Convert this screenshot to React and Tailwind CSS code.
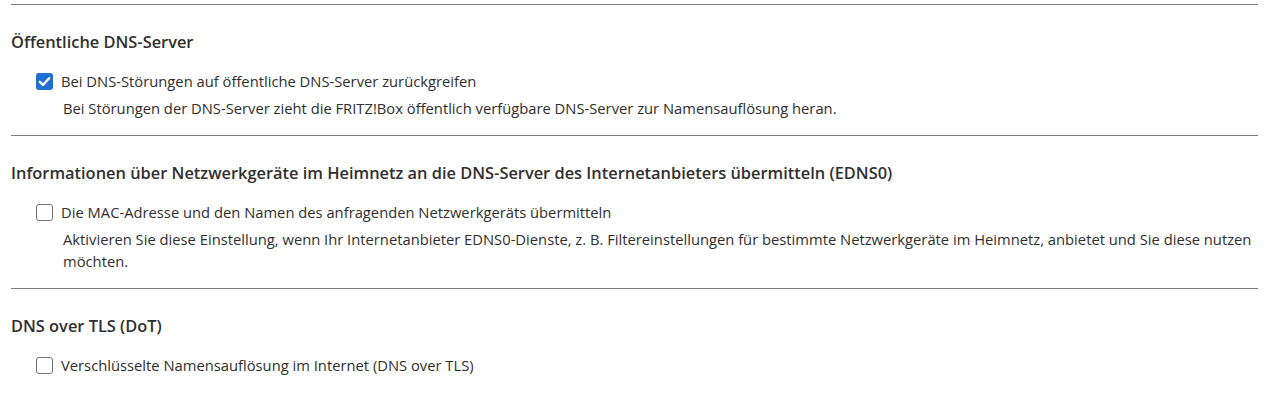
const sections = [
  {
    title: "Öffentliche DNS-Server",
    label: "Bei DNS-Störungen auf öffentliche DNS-Server zurückgreifen",
    checked: true,
    hint: "Bei Störungen der DNS-Server zieht die FRITZ!Box öffentlich verfügbare DNS-Server zur Namensauflösung heran.",
  },
  {
    title: "Informationen über Netzwerkgeräte im Heimnetz an die DNS-Server des Internetanbieters übermitteln (EDNS0)",
    label: "Die MAC-Adresse und den Namen des anfragenden Netzwerkgeräts übermitteln",
    checked: false,
    hint: "Aktivieren Sie diese Einstellung, wenn Ihr Internetanbieter EDNS0-Dienste, z. B. Filtereinstellungen für bestimmte Netzwerkgeräte im Heimnetz, anbietet und Sie diese nutzen möchten.",
  },
  {
    title: "DNS over TLS (DoT)",
    label: "Verschlüsselte Namensauflösung im Internet (DNS over TLS)",
    checked: false,
  },
];

function Checkbox({ checked }) {
  return checked ? (
    <span className="flex h-[17px] w-[17px] shrink-0 items-center justify-center rounded-[3px] bg-[#1f6fd0]">
      <svg viewBox="0 0 16 16" className="h-[17px] w-[17px]" fill="none">
        <path d="M3.6 8.3l2.9 2.9 5.9-6.3" stroke="#fff" strokeWidth="2.2" strokeLinecap="round" strokeLinejoin="round" />
      </svg>
    </span>
  ) : (
    <span className="h-[17px] w-[17px] shrink-0 rounded-[3px] border-[1.5px] border-[#757575] bg-white" />
  );
}

export default function App() {
  return (
    <div className="min-h-[404px] bg-white pt-[4px] pl-[11px] pr-[13px] font-['Open_Sans',sans-serif] text-[14.75px] text-[#2f2f2f]">
      {sections.map((s, i) => (
        <div key={i}>
          {/* divider */}
          <div className={`h-px bg-[#7f7f7f] ${i === 0 ? "" : "mt-[16px]"}`} />

          <h3 className="mt-[25px] text-[16.4px] font-semibold leading-[24px] text-[#2f2f2f]">
            {s.title}
          </h3>

          <label className="mt-[16px] flex items-center gap-[8px] pl-[25px] leading-[22px]">
            <Checkbox checked={s.checked} />
            <span>{s.label}</span>
          </label>

          {s.hint && (
            <p className="mt-[5px] -mr-[6px] pl-[52px] leading-[22px]">{s.hint}</p>
          )}
        </div>
      ))}
    </div>
  );
}
